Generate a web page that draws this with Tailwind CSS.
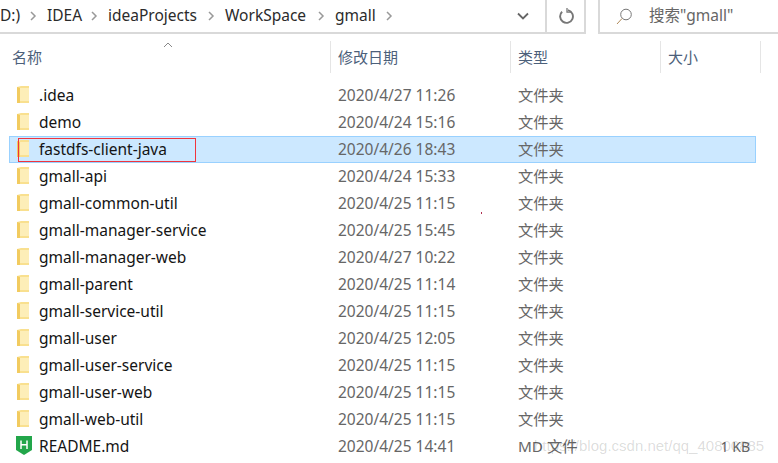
<!DOCTYPE html>
<html lang="zh">
<head>
  <meta charset="UTF-8" />
  <title>gmall</title>
  <script src="https://cdn.jsdelivr.net/npm/@tailwindcss/browser@4"></script>
</head>
<body class="relative w-[778px] h-[463px] overflow-hidden bg-white font-['Noto_Sans','Noto_Sans_CJK_SC',sans-serif] text-[15.5px] text-[#141414]">

  <!-- Address bar -->
  <div class="flex h-[34px]">
    <div class="flex items-center w-[586px] h-full border-b-2 border-r-2 border-[#d9d9d9] text-[#2b2b2b]">
      <span class="w-[25px]">D:)</span>
      <svg class="w-[22px] h-[12px] text-[#999]" viewBox="0 0 22 12" fill="none" stroke="currentColor" stroke-width="1.5"><path d="M6 2l4 4-4 4" /></svg>
      <span class="w-[39px]">IDEA</span>
      <svg class="w-[22px] h-[12px] text-[#999]" viewBox="0 0 22 12" fill="none" stroke="currentColor" stroke-width="1.5"><path d="M6 2l4 4-4 4" /></svg>
      <span class="w-[95px]">ideaProjects</span>
      <svg class="w-[22px] h-[12px] text-[#999]" viewBox="0 0 22 12" fill="none" stroke="currentColor" stroke-width="1.5"><path d="M6 2l4 4-4 4" /></svg>
      <span class="w-[88px]">WorkSpace</span>
      <svg class="w-[22px] h-[12px] text-[#999]" viewBox="0 0 22 12" fill="none" stroke="currentColor" stroke-width="1.5"><path d="M6 2l4 4-4 4" /></svg>
      <span class="w-[46px]">gmall</span>
      <svg class="w-[22px] h-[12px] text-[#999]" viewBox="0 0 22 12" fill="none" stroke="currentColor" stroke-width="1.5"><path d="M6 2l4 4-4 4" /></svg>
      <svg class="ml-auto mr-[16px] w-[12px] h-[8px] text-[#666]" viewBox="0 0 12 8" fill="none" stroke="currentColor" stroke-width="1.8"><path d="M1 1.5l5 5 5-5" /></svg>
      <div class="flex items-center justify-center w-[39px] h-full border-l-2 border-[#d9d9d9]">
        <svg class="w-[16px] h-[16px] text-[#777]" viewBox="0 0 16 16" fill="none" stroke="currentColor" stroke-width="1.9"><path d="M10 2.2a6.4 6.4 0 1 1-5.9 1.6" /><path d="M9 0v4.2h4.4" stroke-width="1.3" /></svg>
      </div>
    </div>
    <div class="flex items-center flex-1 ml-[12px] pl-[16px] h-full border-l-2 border-b-2 border-[#d9d9d9] text-[#666]">
      <svg class="w-[16px] h-[17px]" viewBox="0 0 16 17" fill="none" stroke-width="1"><circle cx="10" cy="6.5" r="5.3" stroke="#777" /><path d="M6 10.5L1 16" stroke="#b08a5a" /></svg>
      <span class="ml-[17px]">搜索"gmall"</span>
    </div>
  </div>

  <!-- Column headers -->
  <div class="relative flex h-[32px] mt-[7px] text-[#4c607a] text-[15px]">
    <div class="w-[331px] pl-[12px] border-r border-[#e5e5e5] leading-[32px]">名称</div>
    <div class="w-[180px] pl-[7px] border-r border-[#e5e5e5] leading-[32px]">修改日期</div>
    <div class="w-[150px] pl-[7px] border-r border-[#e5e5e5] leading-[32px]">类型</div>
    <div class="w-[100px] pl-[7px] border-r border-[#e5e5e5] leading-[32px]">大小</div>
    <svg class="absolute left-[163px] top-[1px] w-[10px] h-[6px] text-[#888]" viewBox="0 0 10 6" fill="none" stroke="currentColor"><path d="M1 5l4-4 4 4" /></svg>
  </div>

  <!-- File list -->
  <div class="mt-[9px] ml-[9px] w-[747px]">
    <div class="flex items-center h-[27px]"><svg class="ml-[8px] w-[12px] h-[17px] -mt-[3px]" viewBox="0 0 12 17"><path d="M0 1l4-1h8v17H0z" fill="#f9e08f" /><path d="M0 1l3 1v15H0z" fill="#f2cb5f" /><path d="M3 2h9v13H3z" fill="#fdeeb8" /></svg><span class="ml-[10px] w-[299px]">.idea</span><span class="w-[180px] text-[#666]">2020/4/27 11:26</span><span class="text-[#666] text-[15.3px]">文件夹</span></div>
    <div class="flex items-center h-[27px]"><svg class="ml-[8px] w-[12px] h-[17px] -mt-[3px]" viewBox="0 0 12 17"><path d="M0 1l4-1h8v17H0z" fill="#f9e08f" /><path d="M0 1l3 1v15H0z" fill="#f2cb5f" /><path d="M3 2h9v13H3z" fill="#fdeeb8" /></svg><span class="ml-[10px] w-[299px]">demo</span><span class="w-[180px] text-[#666]">2020/4/24 15:16</span><span class="text-[#666] text-[15.3px]">文件夹</span></div>
    <div class="relative flex items-center h-[27px] bg-[#cce8ff] outline outline-[#99d1ff] -outline-offset-1"><svg class="ml-[8px] w-[12px] h-[17px] -mt-[3px]" viewBox="0 0 12 17"><path d="M0 1l4-1h8v17H0z" fill="#f9e08f" /><path d="M0 1l3 1v15H0z" fill="#f2cb5f" /><path d="M3 2h9v13H3z" fill="#fdeeb8" /></svg><span class="ml-[10px] w-[299px]">fastdfs-client-java</span><span class="w-[180px] text-[#666]">2020/4/26 18:43</span><span class="text-[#666] text-[15.3px]">文件夹</span><div class="absolute left-[9px] top-[2px] w-[178px] h-[24px] border border-[#f0343c]"></div></div>
    <div class="flex items-center h-[27px]"><svg class="ml-[8px] w-[12px] h-[17px] -mt-[3px]" viewBox="0 0 12 17"><path d="M0 1l4-1h8v17H0z" fill="#f9e08f" /><path d="M0 1l3 1v15H0z" fill="#f2cb5f" /><path d="M3 2h9v13H3z" fill="#fdeeb8" /></svg><span class="ml-[10px] w-[299px]">gmall-api</span><span class="w-[180px] text-[#666]">2020/4/24 15:33</span><span class="text-[#666] text-[15.3px]">文件夹</span></div>
    <div class="flex items-center h-[27px]"><svg class="ml-[8px] w-[12px] h-[17px] -mt-[3px]" viewBox="0 0 12 17"><path d="M0 1l4-1h8v17H0z" fill="#f9e08f" /><path d="M0 1l3 1v15H0z" fill="#f2cb5f" /><path d="M3 2h9v13H3z" fill="#fdeeb8" /></svg><span class="ml-[10px] w-[299px]">gmall-common-util</span><span class="w-[180px] text-[#666]">2020/4/25 11:15</span><span class="text-[#666] text-[15.3px]">文件夹</span></div>
    <div class="flex items-center h-[27px]"><svg class="ml-[8px] w-[12px] h-[17px] -mt-[3px]" viewBox="0 0 12 17"><path d="M0 1l4-1h8v17H0z" fill="#f9e08f" /><path d="M0 1l3 1v15H0z" fill="#f2cb5f" /><path d="M3 2h9v13H3z" fill="#fdeeb8" /></svg><span class="ml-[10px] w-[299px]">gmall-manager-service</span><span class="w-[180px] text-[#666]">2020/4/25 15:45</span><span class="text-[#666] text-[15.3px]">文件夹</span></div>
    <div class="flex items-center h-[27px]"><svg class="ml-[8px] w-[12px] h-[17px] -mt-[3px]" viewBox="0 0 12 17"><path d="M0 1l4-1h8v17H0z" fill="#f9e08f" /><path d="M0 1l3 1v15H0z" fill="#f2cb5f" /><path d="M3 2h9v13H3z" fill="#fdeeb8" /></svg><span class="ml-[10px] w-[299px]">gmall-manager-web</span><span class="w-[180px] text-[#666]">2020/4/27 10:22</span><span class="text-[#666] text-[15.3px]">文件夹</span></div>
    <div class="flex items-center h-[27px]"><svg class="ml-[8px] w-[12px] h-[17px] -mt-[3px]" viewBox="0 0 12 17"><path d="M0 1l4-1h8v17H0z" fill="#f9e08f" /><path d="M0 1l3 1v15H0z" fill="#f2cb5f" /><path d="M3 2h9v13H3z" fill="#fdeeb8" /></svg><span class="ml-[10px] w-[299px]">gmall-parent</span><span class="w-[180px] text-[#666]">2020/4/25 11:14</span><span class="text-[#666] text-[15.3px]">文件夹</span></div>
    <div class="flex items-center h-[27px]"><svg class="ml-[8px] w-[12px] h-[17px] -mt-[3px]" viewBox="0 0 12 17"><path d="M0 1l4-1h8v17H0z" fill="#f9e08f" /><path d="M0 1l3 1v15H0z" fill="#f2cb5f" /><path d="M3 2h9v13H3z" fill="#fdeeb8" /></svg><span class="ml-[10px] w-[299px]">gmall-service-util</span><span class="w-[180px] text-[#666]">2020/4/25 11:15</span><span class="text-[#666] text-[15.3px]">文件夹</span></div>
    <div class="flex items-center h-[27px]"><svg class="ml-[8px] w-[12px] h-[17px] -mt-[3px]" viewBox="0 0 12 17"><path d="M0 1l4-1h8v17H0z" fill="#f9e08f" /><path d="M0 1l3 1v15H0z" fill="#f2cb5f" /><path d="M3 2h9v13H3z" fill="#fdeeb8" /></svg><span class="ml-[10px] w-[299px]">gmall-user</span><span class="w-[180px] text-[#666]">2020/4/25 12:05</span><span class="text-[#666] text-[15.3px]">文件夹</span></div>
    <div class="flex items-center h-[27px]"><svg class="ml-[8px] w-[12px] h-[17px] -mt-[3px]" viewBox="0 0 12 17"><path d="M0 1l4-1h8v17H0z" fill="#f9e08f" /><path d="M0 1l3 1v15H0z" fill="#f2cb5f" /><path d="M3 2h9v13H3z" fill="#fdeeb8" /></svg><span class="ml-[10px] w-[299px]">gmall-user-service</span><span class="w-[180px] text-[#666]">2020/4/25 11:15</span><span class="text-[#666] text-[15.3px]">文件夹</span></div>
    <div class="flex items-center h-[27px]"><svg class="ml-[8px] w-[12px] h-[17px] -mt-[3px]" viewBox="0 0 12 17"><path d="M0 1l4-1h8v17H0z" fill="#f9e08f" /><path d="M0 1l3 1v15H0z" fill="#f2cb5f" /><path d="M3 2h9v13H3z" fill="#fdeeb8" /></svg><span class="ml-[10px] w-[299px]">gmall-user-web</span><span class="w-[180px] text-[#666]">2020/4/25 11:15</span><span class="text-[#666] text-[15.3px]">文件夹</span></div>
    <div class="flex items-center h-[27px]"><svg class="ml-[8px] w-[12px] h-[17px] -mt-[3px]" viewBox="0 0 12 17"><path d="M0 1l4-1h8v17H0z" fill="#f9e08f" /><path d="M0 1l3 1v15H0z" fill="#f2cb5f" /><path d="M3 2h9v13H3z" fill="#fdeeb8" /></svg><span class="ml-[10px] w-[299px]">gmall-web-util</span><span class="w-[180px] text-[#666]">2020/4/25 11:15</span><span class="text-[#666] text-[15.3px]">文件夹</span></div>
    <div class="flex items-center h-[27px]"><svg class="ml-[7px] w-[16px] h-[19px] -mt-[3px]" viewBox="0 0 16 19"><path d="M0 0h16v14l-8 5-8-5z" fill="#22a64a" /><path d="M5 4.5v8.5M11 4.5v8.5M5 8.7h6" stroke="#fff" stroke-width="1.5" fill="none" /></svg><span class="ml-[7px] w-[299px]">README.md</span><span class="w-[180px] text-[#666]">2020/4/25 14:41</span><span class="w-[132px] text-[#666] text-[15.3px]">MD 文件</span><span class="w-[100px] text-right text-[#666] text-[14px]">1 KB</span></div>
  </div>

  <!-- Watermark and stray dot lying over the list -->
  <div class="absolute left-[534px] top-[435px] text-[15px] font-['Liberation_Sans',sans-serif] text-black/15 whitespace-nowrap">https://blog.csdn.net/qq_40800885</div>
  <div class="absolute left-[481px] top-[212px] w-[1px] h-[2px] bg-[#b03050]"></div>
</body>
</html>
